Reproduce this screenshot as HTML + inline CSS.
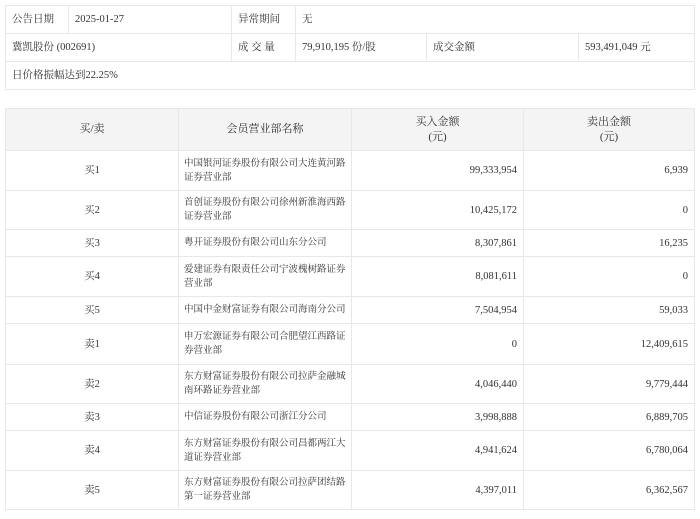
<!DOCTYPE html>
<html><head><meta charset="utf-8"><style>
body{margin:0;background:#fff;font-family:"Liberation Serif","Noto Serif CJK SC",serif;font-size:10.5px;color:#333;}
table{border-collapse:collapse;position:absolute;left:5px;table-layout:fixed;}
td{border:1px solid #e8e8e8;padding:0 6px;line-height:15px;}
#t1{top:5px;width:690px}
#t1 td{height:27px}
#t2{top:108px;width:690px}
#t2 th{background:#f4f4f4;border:1px solid #e8e8e8;font-weight:normal;height:41px;padding:0;line-height:15px;font-size:11px}
#t2 td.c{text-align:center}
#t2 td.r{text-align:right}
#t2 td.n{font-size:9.5px;padding:0 2px 0 5px;line-height:14px}
</style></head><body>
<table id="t1">
<colgroup><col style="width:63px"><col style="width:163px"><col style="width:64px"><col style="width:131px"><col style="width:152px"><col></colgroup>
<tr><td>公告日期</td><td>2025-01-27</td><td>异常期间</td><td colspan="3">无</td></tr>
<tr><td colspan="2">冀凯股份 (002691)</td><td>成 交 量</td><td>79,910,195 份/股</td><td>成交金额</td><td>593,491,049 元</td></tr>
<tr><td colspan="6">日价格振幅达到22.25%</td></tr>
</table>
<table id="t2">
<colgroup><col style="width:173px"><col style="width:173px"><col style="width:172px"><col></colgroup>
<tr><th>买/卖</th><th>会员营业部名称</th><th>买入金额<br>(元)</th><th>卖出金额<br>(元)</th></tr>
<tr style="height:40px"><td class="c">买1</td><td class="n">中国银河证券股份有限公司大连黄河路证券营业部</td><td class="r">99,333,954</td><td class="r">6,939</td></tr>
<tr style="height:39px"><td class="c">买2</td><td class="n">首创证券股份有限公司徐州新淮海西路证券营业部</td><td class="r">10,425,172</td><td class="r">0</td></tr>
<tr style="height:27px"><td class="c">买3</td><td class="n">粤开证券股份有限公司山东分公司</td><td class="r">8,307,861</td><td class="r">16,235</td></tr>
<tr style="height:40px"><td class="c">买4</td><td class="n">爱建证券有限责任公司宁波槐树路证券营业部</td><td class="r">8,081,611</td><td class="r">0</td></tr>
<tr style="height:27px"><td class="c">买5</td><td class="n">中国中金财富证券有限公司海南分公司</td><td class="r">7,504,954</td><td class="r">59,033</td></tr>
<tr style="height:41px"><td class="c">卖1</td><td class="n">申万宏源证券有限公司合肥望江西路证券营业部</td><td class="r">0</td><td class="r">12,409,615</td></tr>
<tr style="height:39px"><td class="c">卖2</td><td class="n">东方财富证券股份有限公司拉萨金融城南环路证券营业部</td><td class="r">4,046,440</td><td class="r">9,779,444</td></tr>
<tr style="height:27px"><td class="c">卖3</td><td class="n">中信证券股份有限公司浙江分公司</td><td class="r">3,998,888</td><td class="r">6,889,705</td></tr>
<tr style="height:40px"><td class="c">卖4</td><td class="n">东方财富证券股份有限公司昌都两江大道证券营业部</td><td class="r">4,941,624</td><td class="r">6,780,064</td></tr>
<tr style="height:39px"><td class="c">卖5</td><td class="n">东方财富证券股份有限公司拉萨团结路第一证券营业部</td><td class="r">4,397,011</td><td class="r">6,362,567</td></tr>
</table>
</body></html>
